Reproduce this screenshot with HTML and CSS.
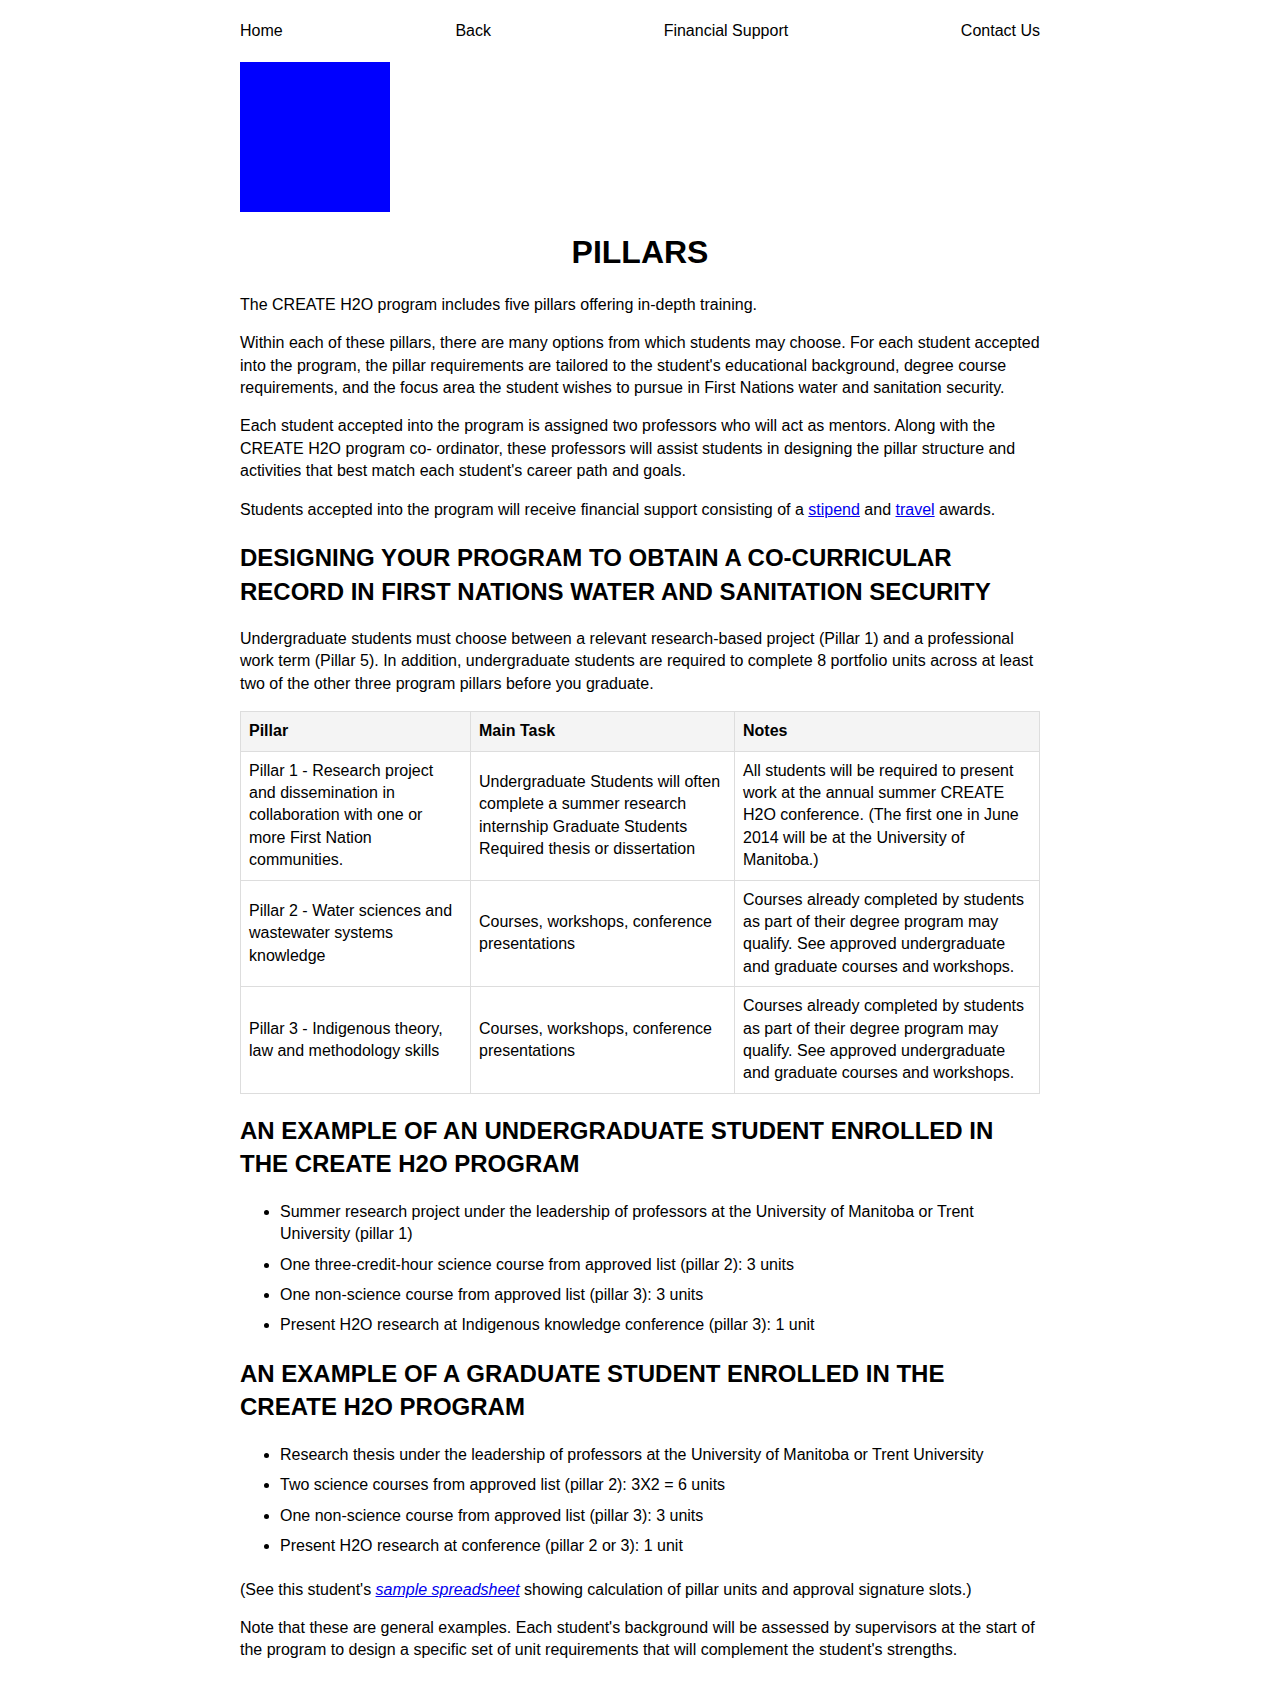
FILE: index.html
```html
<!DOCTYPE html>
<html lang="en">
<head>
<meta charset="utf-8">
<title>Pillars</title>
<link rel="stylesheet" href="styles.css">
</head>
<body>
<div class="page">
  <nav class="nav">
    <a class="nav-link" href="#">Home</a>
    <a class="nav-link" href="#">Back</a>
    <a class="nav-link" href="#">Financial Support</a>
    <a class="nav-link" href="#">Contact Us</a>
  </nav>
  <div class="logo"></div>
  <h1 class="title">PILLARS</h1>
  <p>The CREATE H2O program includes five pillars offering in-depth training.</p>
  <p>Within each of these pillars, there are many options from which students may choose. For each student accepted into the program, the pillar requirements are tailored to the student's educational background, degree course requirements, and the focus area the student wishes to pursue in First Nations water and sanitation security.</p>
  <p>Each student accepted into the program is assigned two professors who will act as mentors. Along with the CREATE H2O program co- ordinator, these professors will assist students in designing the pillar structure and activities that best match each student's career path and goals.</p>
  <p>Students accepted into the program will receive financial support consisting of a <a href="#">stipend</a> and <a href="#">travel</a> awards.</p>
  <h2 class="section">DESIGNING YOUR PROGRAM TO OBTAIN A CO-CURRICULAR RECORD IN FIRST NATIONS WATER AND SANITATION SECURITY</h2>
  <p>Undergraduate students must choose between a relevant research-based project (Pillar 1) and a professional work term (Pillar 5). In addition, undergraduate students are required to complete 8 portfolio units across at least two of the other three program pillars before you graduate.</p>
  <table class="pillars">
    <thead>
      <tr>
        <th class="c1">Pillar</th>
        <th class="c2">Main Task</th>
        <th class="c3">Notes</th>
      </tr>
    </thead>
    <tbody>
      <tr>
        <td>Pillar 1 - Research project and dissemination in collaboration with one or more First Nation communities.</td>
        <td>Undergraduate Students will often complete a summer research internship Graduate Students Required thesis or dissertation</td>
        <td>All students will be required to present work at the annual summer CREATE H2O conference. (The first one in June 2014 will be at the University of Manitoba.)</td>
      </tr>
      <tr>
        <td>Pillar 2 - Water sciences and wastewater systems knowledge</td>
        <td>Courses, workshops, conference presentations</td>
        <td>Courses already completed by students as part of their degree program may qualify. See approved undergraduate and graduate courses and workshops.</td>
      </tr>
      <tr>
        <td>Pillar 3 - Indigenous theory, law and methodology skills</td>
        <td>Courses, workshops, conference presentations</td>
        <td>Courses already completed by students as part of their degree program may qualify. See approved undergraduate and graduate courses and workshops.</td>
      </tr>
    </tbody>
  </table>
  <h2 class="section">AN EXAMPLE OF AN UNDERGRADUATE STUDENT ENROLLED IN THE CREATE H2O PROGRAM</h2>
  <ul class="list">
    <li>Summer research project under the leadership of professors at the University of Manitoba or Trent University (pillar 1)</li>
    <li>One three-credit-hour science course from approved list (pillar 2): 3 units</li>
    <li>One non-science course from approved list (pillar 3): 3 units</li>
    <li>Present H2O research at Indigenous knowledge conference (pillar 3): 1 unit</li>
  </ul>
  <h2 class="section">AN EXAMPLE OF A GRADUATE STUDENT ENROLLED IN THE CREATE H2O PROGRAM</h2>
  <ul class="list list-last">
    <li>Research thesis under the leadership of professors at the University of Manitoba or Trent University</li>
    <li>Two science courses from approved list (pillar 2): 3X2 = 6 units</li>
    <li>One non-science course from approved list (pillar 3): 3 units</li>
    <li>Present H2O research at conference (pillar 2 or 3): 1 unit</li>
  </ul>
  <p>(See this student's <a href="#"><em>sample spreadsheet</em></a> showing calculation of pillar units and approval signature slots.)</p>
  <p>Note that these are general examples. Each student's background will be assessed by supervisors at the start of the program to design a specific set of unit requirements that will complement the student's strengths.</p>
</div>
</body>
</html>
```

FILE: styles.css
```css
html, body {
  margin: 0;
  padding: 0;
  background: #fff;
}

body {
  font-family: "Liberation Sans", Arial, sans-serif;
  font-size: 16px;
  line-height: 1.4;
  color: #000;
}

.page {
  width: 800px;
  margin: 0 auto;
  padding: 20px 0 24px;
}

.nav {
  display: flex;
  justify-content: space-between;
  align-items: center;
}

.nav-link {
  color: #000;
  text-decoration: none;
}

.logo {
  width: 150px;
  height: 150px;
  background: #0000ff;
  margin-top: 20px;
}

.title {
  text-align: center;
  font-size: 32px;
  line-height: 1.2;
  font-weight: bold;
  margin: 21px 0 22px;
}

p {
  margin: 16px 0;
}

a {
  color: #0000ee;
}

.section {
  font-size: 24px;
  line-height: 1.4;
  font-weight: bold;
  margin: 20px 0;
}

.pillars {
  width: 800px;
  border-collapse: collapse;
  margin: 16px 0 0;
}

.pillars th,
.pillars td {
  border: 1px solid #dddddd;
  padding: 8px;
  vertical-align: middle;
  text-align: left;
}

.pillars th {
  background: #f4f4f4;
  font-weight: bold;
}

.c1 { width: 213px; }
.c2 { width: 247px; }
.c3 { width: auto; }

.list {
  margin: 16px 0;
  padding-left: 40px;
}

.list li {
  margin-bottom: 8px;
}

.list-last {
  margin-bottom: 21px;
}
```
